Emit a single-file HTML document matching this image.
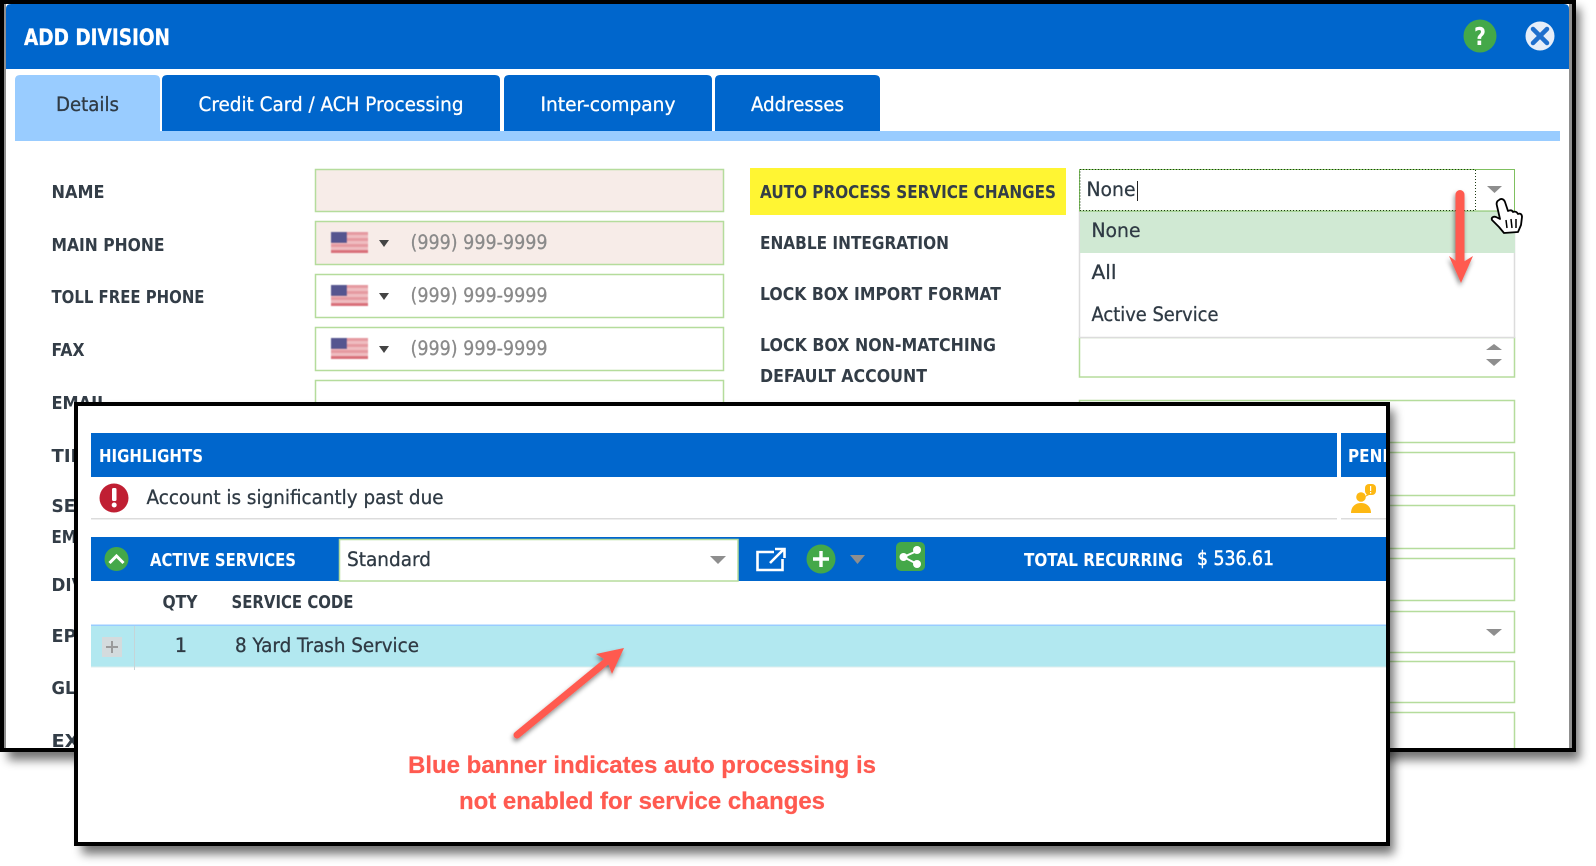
<!DOCTYPE html>
<html><head><meta charset="utf-8"><title>Add Division</title>
<style>
html,body{margin:0;padding:0;background:#fff;width:1596px;height:866px;overflow:hidden}
svg{display:block}
text{font-family:"DejaVu Sans","Liberation Sans",sans-serif;fill:#2f3a44;stroke:#2f3a44;stroke-width:.3px;font-size:19.5px}
.b{font-weight:700;font-size:17.6px;fill:#333d47;stroke-width:0}
.w{fill:#fff;stroke:#fff}
.h{font-family:"Liberation Sans",sans-serif;font-weight:700;font-size:24px;fill:#ff5a50;stroke:#ff5a50;stroke-width:.25px}
.p{fill:#8a8a8a;stroke:#8a8a8a}
.i{fill:#fff;stroke:#b5dc9c;stroke-width:1.5}
.pk{fill:#f7ece8;stroke:#b5dc9c;stroke-width:1.5}
.ar{fill:#8e8e8e}
</style></head><body>
<svg width="1596" height="866" viewBox="0 0 1596 866" xmlns="http://www.w3.org/2000/svg">
<defs>
<filter id="s" x="-5%" y="-5%" width="110%" height="110%"><feGaussianBlur stdDeviation="5"/></filter>
<filter id="a" filterUnits="userSpaceOnUse" x="0" y="0" width="1596" height="866"><feDropShadow dx="-1" dy="3" stdDeviation="2.5" flood-color="#000" flood-opacity=".45"/></filter>
<filter id="f" x="-10%" y="-10%" width="120%" height="120%"><feGaussianBlur stdDeviation=".5"/></filter>
<clipPath id="win"><rect x="4" y="4" width="1568" height="744"/></clipPath>
<clipPath id="ov"><rect x="78" y="406" width="1308" height="436"/></clipPath>
<g id="flag" filter="url(#f)">
<rect x="0" y="0" width="37" height="21" fill="#e59aa1"/>
<rect x="0" y="3" width="37" height="3" fill="#efbcc0"/><rect x="0" y="9" width="37" height="3" fill="#efbcc0"/><rect x="0" y="15" width="37" height="3" fill="#efbcc0"/>
<rect x="0" y="18" width="37" height="3" fill="#d9707a"/>
<rect x="0" y="0" width="16" height="11" fill="#54558f"/>
</g>
</defs>

<!-- window -->
<rect x="8" y="8" width="1572" height="752" fill="#000" opacity=".55" filter="url(#s)"/>
<rect x="0" y="0" width="1576" height="752" fill="#000"/>
<rect x="4" y="4" width="1568" height="744" fill="#8f8f8f"/>
<rect x="6" y="4" width="1563" height="744" fill="#fff"/>
<g clip-path="url(#win)">
<path d="M6 69V9q0-5 5-5H1564q5 0 5 5V69z" fill="#0066cc"/>
<text class="b w" x="24" y="45" style="font-size:22.5px;stroke-width:.3px" textLength="146" lengthAdjust="spacingAndGlyphs">ADD DIVISION</text>
<circle cx="1480" cy="36" r="16.500" fill="#44a849"/>
<text x="1474" y="45" class="b w" style="font-size:25px" textLength="12" lengthAdjust="spacingAndGlyphs">?</text>
<circle cx="1540" cy="36" r="14.500" fill="#e6eef9"/>
<path d="M1533 29l14 14M1547 29l-14 14" stroke="#1f6fcd" stroke-width="4.500" stroke-linecap="round"/>

<!-- tabs -->
<rect x="15" y="131" width="1545" height="10" fill="#99ccff"/>
<path d="M15 131V80q0-5 5-5H155q5 0 5 5V131z" fill="#99ccff"/>
<path d="M162 131V80q0-5 5-5H495q5 0 5 5V131z" fill="#0066cc"/>
<path d="M504 131V80q0-5 5-5H707q5 0 5 5V131z" fill="#0066cc"/>
<path d="M715 131V80q0-5 5-5H875q5 0 5 5V131z" fill="#0066cc"/>
<text x="56" y="111" textLength="63" lengthAdjust="spacingAndGlyphs">Details</text>
<text class="w" x="198.500" y="111" textLength="265" lengthAdjust="spacingAndGlyphs">Credit Card / ACH Processing</text>
<text class="w" x="540.500" y="111" textLength="135" lengthAdjust="spacingAndGlyphs">Inter-company</text>
<text class="w" x="751" y="111" textLength="93" lengthAdjust="spacingAndGlyphs">Addresses</text>

<!-- left labels -->
<text class="b" x="51.500" y="198" textLength="53" lengthAdjust="spacingAndGlyphs">NAME</text>
<text class="b" x="51.500" y="251" textLength="113" lengthAdjust="spacingAndGlyphs">MAIN PHONE</text>
<text class="b" x="51.500" y="303" textLength="153" lengthAdjust="spacingAndGlyphs">TOLL FREE PHONE</text>
<text class="b" x="51.500" y="356" textLength="33" lengthAdjust="spacingAndGlyphs">FAX</text>
<text class="b" x="51.500" y="409" textLength="56" lengthAdjust="spacingAndGlyphs">EMAIL</text>
<text class="b" x="51.500" y="462" textLength="37" lengthAdjust="spacingAndGlyphs">TIM</text>
<text class="b" x="51.500" y="512" textLength="37" lengthAdjust="spacingAndGlyphs">SER</text>
<text class="b" x="51.500" y="543" textLength="37" lengthAdjust="spacingAndGlyphs">EMA</text>
<text class="b" x="51.500" y="591" textLength="33" lengthAdjust="spacingAndGlyphs">DIV</text>
<text class="b" x="51.500" y="642" textLength="37" lengthAdjust="spacingAndGlyphs">EPA</text>
<text class="b" x="51.500" y="694" textLength="24" lengthAdjust="spacingAndGlyphs">GL</text>
<text class="b" x="51.500" y="747" textLength="28" lengthAdjust="spacingAndGlyphs">EX</text>

<!-- left inputs -->
<rect class="pk" x="315.500" y="169.500" width="408" height="42"/>
<rect class="pk" x="315.500" y="221.500" width="408" height="43"/>
<rect class="i" x="315.500" y="274.500" width="408" height="43"/>
<rect class="i" x="315.500" y="327.500" width="408" height="43"/>
<rect class="i" x="315.500" y="380.500" width="408" height="60"/>
<use href="#flag" x="331" y="232"/><use href="#flag" x="331" y="285"/><use href="#flag" x="331" y="338"/>
<path d="M379 240h10l-5 7zM379 293h10l-5 7zM379 346h10l-5 7z" fill="#444"/>
<text class="p" x="410.500" y="249" textLength="137" lengthAdjust="spacingAndGlyphs">(999) 999-9999</text>
<text class="p" x="410.500" y="302" textLength="137" lengthAdjust="spacingAndGlyphs">(999) 999-9999</text>
<text class="p" x="410.500" y="355" textLength="137" lengthAdjust="spacingAndGlyphs">(999) 999-9999</text>

<!-- right labels -->
<rect x="750" y="168" width="316" height="47" fill="#fff533"/>
<text class="b" x="760" y="198" textLength="296" lengthAdjust="spacingAndGlyphs">AUTO PROCESS SERVICE CHANGES</text>
<text class="b" x="760" y="249" textLength="189" lengthAdjust="spacingAndGlyphs">ENABLE INTEGRATION</text>
<text class="b" x="760" y="300" textLength="241" lengthAdjust="spacingAndGlyphs">LOCK BOX IMPORT FORMAT</text>
<text class="b" x="760" y="351" textLength="236" lengthAdjust="spacingAndGlyphs">LOCK BOX NON-MATCHING</text>
<text class="b" x="760" y="382" textLength="167" lengthAdjust="spacingAndGlyphs">DEFAULT ACCOUNT</text>

<!-- combobox -->
<rect class="i" x="1079.500" y="337.500" width="435" height="39.500"/>
<path d="M1486 350l8-6 8 6zM1486 359h16l-8 7z" class="ar"/>
<rect x="1079.500" y="211" width="435" height="126.500" fill="#fff" stroke="#dcdcdc" stroke-width="1.500"/>
<rect x="1080" y="211" width="435" height="42" fill="#d0e9d3"/>
<rect x="1079.500" y="169.500" width="435" height="41.500" fill="#fff" stroke="#7fc05f" stroke-width="1"/>
<path d="M1080 169.500H1475.500V210.500H1080z" fill="none" stroke="#1c3a12" stroke-width="1" stroke-dasharray="1 2"/>
<text x="1086.500" y="196" textLength="49" lengthAdjust="spacingAndGlyphs">None</text>
<rect x="1137" y="181" width="1" height="20" fill="#222"/>
<path d="M1487 186h15l-7.500 7z" class="ar"/>
<text x="1091.500" y="237" textLength="49" lengthAdjust="spacingAndGlyphs">None</text>
<text x="1091.500" y="279" textLength="25" lengthAdjust="spacingAndGlyphs">All</text>
<text x="1091.500" y="321" textLength="127" lengthAdjust="spacingAndGlyphs">Active Service</text>

<!-- right column inputs -->
<rect class="i" x="1079.500" y="400.500" width="435" height="42"/>
<rect class="i" x="1079.500" y="452.500" width="435" height="43"/>
<rect class="i" x="1079.500" y="505.500" width="435" height="43"/>
<rect class="i" x="1079.500" y="558.500" width="435" height="42"/>
<rect class="i" x="1079.500" y="611.500" width="435" height="41"/>
<rect class="i" x="1079.500" y="661.500" width="435" height="41"/>
<rect class="i" x="1079.500" y="712.500" width="435" height="60"/>
<path d="M1486 629h16l-8 7z" class="ar"/>
</g>

<!-- red down arrow -->
<g filter="url(#a)" fill="#ff5a50">
<rect x="1455.500" y="190" width="9" height="76" rx="4.500"/>
<path d="M1449 256L1460 264L1473 256L1461 283z"/>
</g>

<!-- hand cursor -->
<path d="M1499 200c2-2 5-1 6 2l3 9c2-1 4-1 5 1c2-1 4 0 5 2c2-1 4 0 4 3l-1 8l-3 7l-14 1l-5-6l-7-7c-1-2 1-4 4-3l4 2l-3-13c-1-3 0-5 2-6z" fill="#fff" stroke="#000" stroke-width="1.800" stroke-linejoin="round"/>
<path d="M1506 220l1 8M1511 219l1 9M1516 219l0 9" stroke="#000" stroke-width="1.500"/>

<!-- overlay -->
<rect x="82" y="410" width="1312" height="444" fill="#000" opacity=".55" filter="url(#s)"/>
<rect x="74" y="402" width="1316" height="444" fill="#000"/>
<rect x="78" y="406" width="1308" height="436" fill="#fff"/>
<g clip-path="url(#ov)">
<rect x="91" y="433" width="1246" height="44" fill="#0066cc"/>
<rect x="1341" y="433" width="50" height="44" fill="#0066cc"/>
<text class="b w" x="99" y="462" textLength="104" lengthAdjust="spacingAndGlyphs">HIGHLIGHTS</text>
<text class="b w" x="1348" y="462" textLength="78" lengthAdjust="spacingAndGlyphs">PENDING</text>
<circle cx="114" cy="498" r="14.500" fill="#c01f33"/>
<rect x="112" y="488" width="4.500" height="13" rx="1.500" fill="#fff"/><circle cx="114.200" cy="505" r="2.500" fill="#fff"/>
<text x="146.500" y="504" textLength="297" lengthAdjust="spacingAndGlyphs">Account is significantly past due</text>
<rect x="91" y="518" width="1246" height="1.500" fill="#dcdcdc"/>
<rect x="1341" y="518" width="45" height="1.500" fill="#dcdcdc"/>
<circle cx="1361" cy="497" r="4.800" fill="#fdb813"/>
<path d="M1351 513c0-6 4-10 10-10s10 4 10 10z" fill="#fdb813"/>
<rect x="1365" y="484" width="11" height="11" rx="4" fill="#fdb813"/>
<path d="M1367 494l-2 3 4-2z" fill="#fdb813"/>
<rect x="1370" y="486" width="1.200" height="5" fill="#fff"/><rect x="1370" y="492" width="1.200" height="1.400" fill="#fff"/>

<rect x="91" y="537" width="1295" height="44" fill="#0066cc"/>
<circle cx="116.500" cy="559" r="12" fill="#44a849"/>
<path d="M109.500 563l7-7 7 7" fill="none" stroke="#fff" stroke-width="3"/>
<text class="b w" x="150" y="566" textLength="146" lengthAdjust="spacingAndGlyphs">ACTIVE SERVICES</text>
<rect x="339.500" y="539.500" width="398.500" height="41.500" class="i"/>
<text x="347" y="566" textLength="84" lengthAdjust="spacingAndGlyphs">Standard</text>
<path d="M710 556h16l-8 8z" class="ar"/>
<path d="M774 552H757.500V570H782.500V559" fill="none" stroke="#fff" stroke-width="2.600"/>
<path d="M770 563L783 550M775 549H784.500V558" fill="none" stroke="#fff" stroke-width="2.600"/>
<circle cx="821" cy="559" r="14.500" fill="#44a849"/>
<path d="M821 551v16M813 559h16" stroke="#fff" stroke-width="3.400"/>
<path d="M850 555h15l-7.500 9z" class="ar"/>
<rect x="896" y="542" width="29" height="29" rx="5" fill="#44a849"/>
<path d="M917 551L903.500 557L917 564" fill="none" stroke="#fff" stroke-width="2"/>
<circle cx="917" cy="550" r="4" fill="#fff"/><circle cx="903.500" cy="557" r="4" fill="#fff"/><circle cx="917" cy="564" r="4" fill="#fff"/>
<text class="b w" x="1024" y="566" textLength="159" lengthAdjust="spacingAndGlyphs">TOTAL RECURRING</text>
<text class="w" x="1197" y="565" textLength="77" lengthAdjust="spacingAndGlyphs" style="stroke-width:.5px">$ 536.61</text>

<text class="b" x="162.500" y="608" textLength="35" lengthAdjust="spacingAndGlyphs">QTY</text>
<text class="b" x="231.500" y="608" textLength="122" lengthAdjust="spacingAndGlyphs">SERVICE CODE</text>
<rect x="91" y="625" width="1295" height="41.500" fill="#b2e8f0"/>
<rect x="91" y="624.500" width="1295" height="1.500" fill="#99ccff"/>
<rect x="91" y="666.500" width="1295" height="1" fill="#dfeeee"/>
<rect x="134" y="626" width="1" height="44" fill="#c5d5d8"/>
<rect x="102" y="637" width="20" height="20" fill="#d4dbdd"/>
<path d="M112 641v12M106 647h12" stroke="#9a9a9a" stroke-width="2"/>
<text x="181" y="652" text-anchor="middle">1</text>
<text x="235" y="652" textLength="184" lengthAdjust="spacingAndGlyphs">8 Yard Trash Service</text>
</g>

<!-- diagonal arrow -->
<g filter="url(#a)">
<path d="M517 735L607 661" stroke="#ff5a50" stroke-width="7" stroke-linecap="round"/>
<path d="M624 648L612 674L607 661L596 654z" fill="#ff5a50"/>
</g>

<text class="h" x="408" y="773" textLength="468" lengthAdjust="spacingAndGlyphs">Blue banner indicates auto processing is</text>
<text class="h" x="459" y="809" textLength="366" lengthAdjust="spacingAndGlyphs">not enabled for service changes</text>
</svg>
</body></html>
